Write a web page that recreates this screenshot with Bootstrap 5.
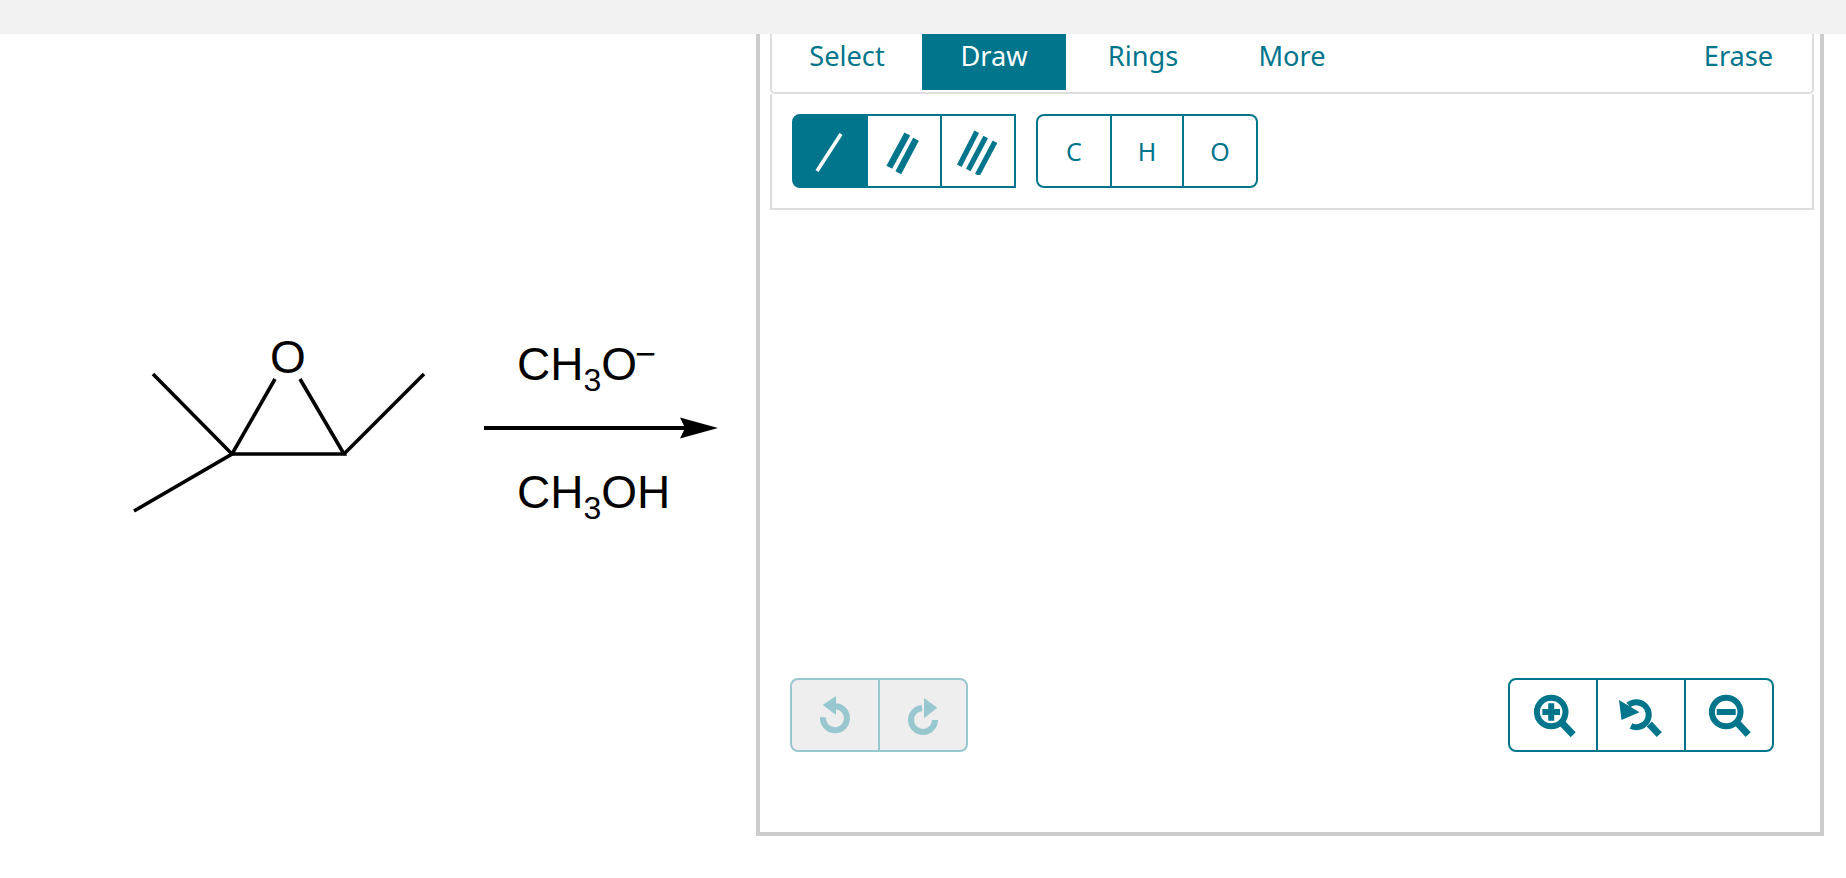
<!DOCTYPE html>
<html>
  <head>
    <meta charset="utf-8" />
    <title>Draw the product</title>
    <meta name="viewport" content="width=device-width, initial-scale=1" />
    <link href="https://cdn.jsdelivr.net/npm/bootstrap@5.3.2/dist/css/bootstrap.min.css" rel="stylesheet" />
    <script src="https://cdn.jsdelivr.net/npm/bootstrap@5.3.2/dist/js/bootstrap.bundle.min.js"></script>
    <style>
      body {
        background: #fff;
        font-family: "Noto Sans", sans-serif;
        overflow: hidden;
      }
      .topStrip {
        height: 34px;
        background: #f2f2f2;
      }
      .questionSide {
        width: 756px;
      }
      .questionSide svg {
        display: block;
      }
      .questionSide text {
        font-family: "Liberation Sans", Arial, sans-serif;
        font-size: 46px;
        fill: #000;
      }
      .drawFrame {
        width: 1068px;
        height: 802px;
        padding: 0 6px 0 10px;
        border: 4px solid #ccc;
        border-top: 0;
      }
      .toolTabs {
        height: 60px;
        border: 2px solid #ddd;
        border-top: 0;
        border-radius: 0 0 5px 5px;
      }
      .toolTab {
        height: 56px;
        line-height: 43px;
        padding: 0;
        text-align: center;
        font-size: 27.2px;
        color: #00758c;
        text-decoration: none;
      }
      .toolTab.on {
        background: #00758c;
        color: #fff;
      }
      .optionBar {
        padding: 20px;
        border: 2px solid #ddd;
        border-top: 0;
      }
      .toolBtn {
        height: 74px;
        padding: 2px 0 0;
        font-size: 25px;
        display: flex;
        align-items: center;
        justify-content: center;
        background: #fff;
        color: #00758c;
        border: 2px solid #00758c;
        border-radius: 8px;
      }
      .btn-group > :not(.btn-check:first-child) + .toolBtn {
        margin-left: 0;
        border-left: 0;
      }
      .toolBtn svg {
        display: block;
        margin-top: -2px;
        fill: #00758c;
        stroke: #00758c;
      }
      .toolBtn.on {
        background: #00758c;
        color: #fff;
      }
      .toolBtn.on svg {
        stroke: #fff;
      }
      .toolBtn:disabled {
        background: #d6d6d6;
        border-color: #00758c;
        opacity: 0.4;
      }
      .squareEnd .toolBtn:last-child {
        border-top-right-radius: 0;
        border-bottom-right-radius: 0;
      }
      .canvasArea {
        height: 622px;
        padding: 0 40px 80px 20px;
      }
    </style>
  </head>
  <body>
    <div class="topStrip"></div>
    <div class="d-flex">
      <div class="questionSide">
        <svg width="756" height="802" viewBox="0 34 756 802">
          <g stroke="#000" stroke-width="3.6" fill="none">
            <path d="M153 374 L232 454 L134 511" />
            <path d="M275 379 L232 454 L344 454 L300 379" />
            <path d="M344 454 L424 374" />
            <path d="M484 428 H690" stroke-width="4" />
          </g>
          <path d="M718 428 L680 417.5 L685 428 L680 438.5 Z" fill="#000" />
          <text x="288" y="373" text-anchor="middle">O</text>
          <text x="517" y="380">CH<tspan font-size="32" dy="11">3</tspan><tspan dy="-11">O</tspan><tspan font-size="36" dx="-2" dy="-14">−</tspan></text>
          <text x="517" y="508">CH<tspan font-size="32" dy="11">3</tspan><tspan dy="-11">OH</tspan></text>
        </svg>
      </div>

      <div class="drawFrame">
        <nav class="toolTabs d-flex">
          <a class="toolTab" style="width: 150px" href="#">Select</a>
          <a class="toolTab on" style="width: 144px" href="#">Draw</a>
          <a class="toolTab" style="width: 154px" href="#">Rings</a>
          <a class="toolTab" style="width: 144px" href="#">More</a>
          <a class="toolTab ms-auto" style="width: 147px" href="#">Erase</a>
        </nav>

        <div class="optionBar d-flex" style="gap: 20px">
          <div class="btn-group squareEnd">
            <button type="button" class="btn toolBtn on" style="width: 76px">
              <svg width="48" height="48" viewBox="-24 -24 48 48" stroke-width="3.6"><path d="M-13 20 L11 -17" /></svg>
            </button>
            <button type="button" class="btn toolBtn" style="width: 74px">
              <svg width="48" height="48" viewBox="-24 -24 48 48" stroke-width="6.5"><path d="M-14.7 16.3 L3.3 -17 M-5.7 21.7 L12 -11.7" /></svg>
            </button>
            <button type="button" class="btn toolBtn" style="width: 74px">
              <svg width="48" height="48" viewBox="-24 -24 48 48" stroke-width="5.2"><path d="M-18.7 14.7 L-1.3 -19.3 M-9.7 19 L7.7 -14 M-.7 24 L17 -9.3" /></svg>
            </button>
          </div>
          <div class="btn-group">
            <button type="button" class="btn toolBtn" style="width: 76px">C</button>
            <button type="button" class="btn toolBtn" style="width: 72px">H</button>
            <button type="button" class="btn toolBtn" style="width: 74px">O</button>
          </div>
        </div>

        <div class="canvasArea d-flex justify-content-between align-items-end">
          <div class="btn-group">
            <button type="button" class="btn toolBtn" style="width: 90px" disabled>
              <svg width="48" height="48" viewBox="-24 -27.3 48 48">
                <path d="M-12 -1 A12 12 0 1 0 1 -12" fill="none" stroke-width="6" />
                <path d="M-12.3 -13.3 L1 -22.3 L1 -3.3 Z" stroke="none" />
              </svg>
            </button>
            <button type="button" class="btn toolBtn" style="width: 88px" disabled>
              <svg width="48" height="48" viewBox="-24 -29 48 48">
                <path d="M12 0 A12 12 0 1 1 -1 -12" fill="none" stroke-width="6" />
                <path d="M14.3 -12.3 L1 -22 L1 -1.7 Z" stroke="none" />
              </svg>
            </button>
          </div>
          <div class="btn-group">
            <button type="button" class="btn toolBtn" style="width: 90px">
              <svg width="48" height="48" viewBox="-24 -24 48 48">
                <circle cx="-1.8" cy="-3" r="14.3" fill="none" stroke-width="6" />
                <path d="M9.2 8.3 L20.2 19.7" fill="none" stroke-width="7" />
                <path d="M-10.6 -3 H7 M-1.8 -11.8 V5.8" fill="none" stroke-width="6" />
              </svg>
            </button>
            <button type="button" class="btn toolBtn" style="width: 88px">
              <svg width="48" height="48" viewBox="-24 -24 48 48">
                <path d="M-10 11 A12.5 12.5 0 1 0 -12.7 -10" fill="none" stroke-width="6" />
                <path d="M-22 -15 L-19.5 5 L-1.5 -2.7 Z" stroke="none" />
                <path d="M8.3 9 L18.3 19.7" fill="none" stroke-width="7" />
              </svg>
            </button>
            <button type="button" class="btn toolBtn" style="width: 88px">
              <svg width="48" height="48" viewBox="-24 -24 48 48">
                <circle cx="-2.8" cy="-3" r="14.3" fill="none" stroke-width="6" />
                <path d="M8.8 8.3 L19.2 19.7" fill="none" stroke-width="7" />
                <path d="M-12.3 -3 H6.7" fill="none" stroke-width="6" />
              </svg>
            </button>
          </div>
        </div>
      </div>
    </div>
  </body>
</html>
